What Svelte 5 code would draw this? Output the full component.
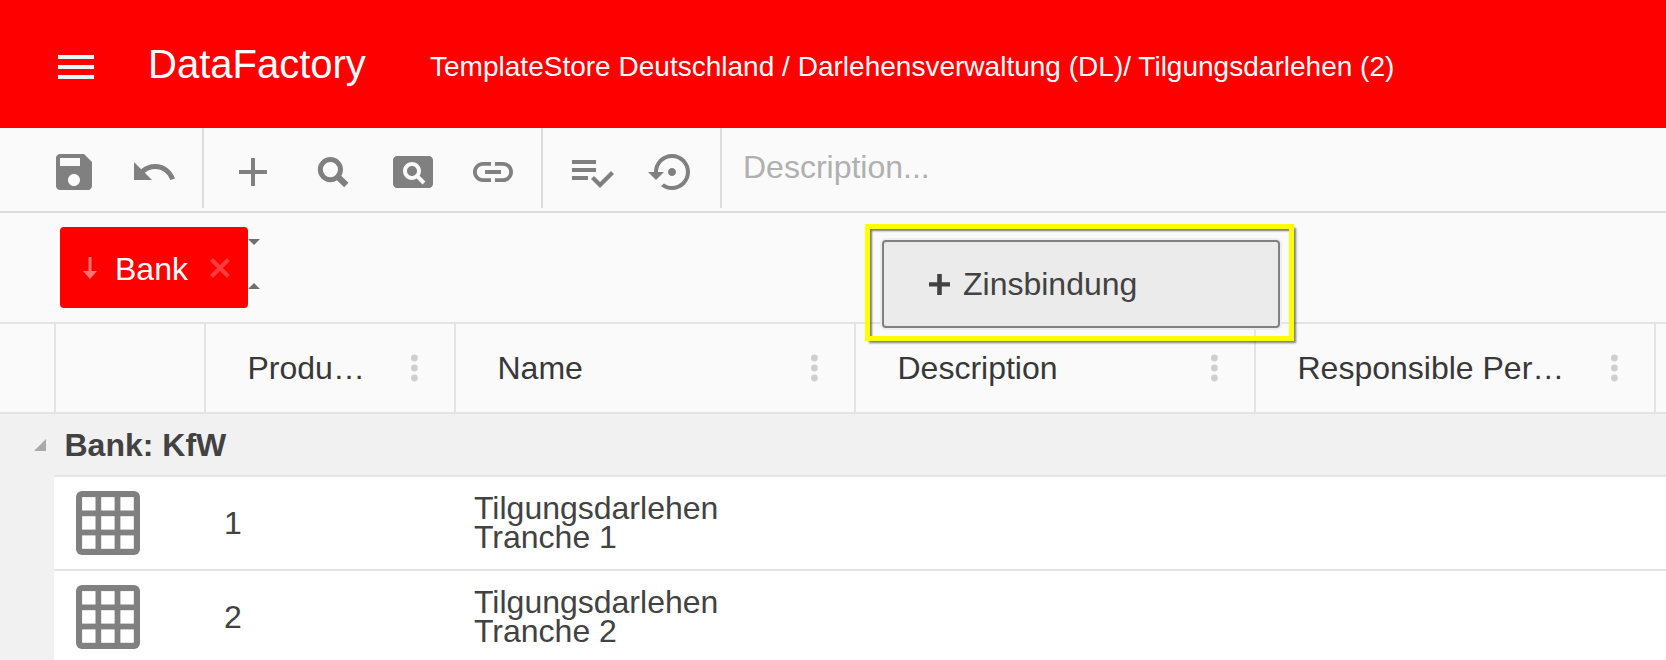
<script>
  const groups = [
    [
      'M17 3H5c-1.11 0-2 .9-2 2v14c0 1.1.89 2 2 2h14c1.1 0 2-.9 2-2V7l-4-4zm-5 16c-1.66 0-3-1.34-3-3s1.34-3 3-3 3 1.34 3 3-1.34 3-3 3zm3-10H5V5h10v4z',
      'M12.5 8c-2.65 0-5.05.99-6.9 2.6L2 7v9h9l-3.62-3.62c1.39-1.16 3.16-1.88 5.12-1.88 3.54 0 6.55 2.31 7.6 5.5l2.37-.78C21.08 11.03 17.15 8 12.5 8z'
    ],
    [
      'M19 13h-6v6h-2v-6H5v-2h6V5h2v6h6v2z',
      'search',
      'M11.5 9C10.12 9 9 10.12 9 11.5s1.12 2.5 2.5 2.5 2.5-1.12 2.5-2.5S12.88 9 11.5 9zM20 4H4c-1.1 0-2 .9-2 2v12c0 1.1.9 2 2 2h16c1.1 0 2-.9 2-2V6c0-1.1-.9-2-2-2zm-3.21 14.21l-2.91-2.91c-.69.44-1.51.7-2.39.7C9.01 16 7 13.99 7 11.5S9.01 7 11.5 7 16 9.01 16 11.5c0 .88-.26 1.69-.7 2.39l2.91 2.9-1.42 1.42z',
      'M3.9 12c0-1.71 1.39-3.1 3.1-3.1h4V7H7c-2.76 0-5 2.24-5 5s2.24 5 5 5h4v-1.9H7c-1.71 0-3.1-1.39-3.1-3.1zM8 13h8v-2H8v2zm9-6h-4v1.9h4c1.71 0 3.1 1.39 3.1 3.1s-1.39 3.1-3.1 3.1h-4V17h4c2.76 0 5-2.24 5-5s-2.24-5-5-5z'
    ],
    [
      'M14 10H2v2h12v-2zm0-4H2v2h12V6zM2 16h8v-2H2v2zm19.5-4.5L23 13l-6.99 7-4.51-4.5L13 14l3.01 3 5.49-5.5z',
      'M14 12c0-1.1-.9-2-2-2s-2 .9-2 2 .9 2 2 2 2-.9 2-2zm-2-9c-4.97 0-9 4.03-9 9H0l4 4 4-4H5c0-3.87 3.13-7 7-7s7 3.13 7 7-3.13 7-7 7c-1.51 0-2.91-.49-4.06-1.3l-1.42 1.44C8.04 20.3 9.94 21 12 21c4.97 0 9-4.03 9-9s-4.03-9-9-9z'
    ]
  ];
  const columns = ['Produ…', 'Name', 'Description', 'Responsible Per…'];
  const rows = [
    { id: 1, name: 'Tilgungsdarlehen Tranche 1' },
    { id: 2, name: 'Tilgungsdarlehen Tranche 2' }
  ];
  const cells = [6.1, 25.2, 44.4];
</script>

<div class="page">
  <header>
    <svg class="icon menu" viewBox="0 0 24 24"><path d="M3 18h18v-2H3v2zm0-5h18v-2H3v2zm0-7v2h18V6H3z" /></svg>
    <h1>DataFactory</h1>
    <div class="crumbs">TemplateStore Deutschland / Darlehensverwaltung (DL)/ Tilgungsdarlehen (2)</div>
  </header>

  <div class="toolbar">
    {#each groups as group}
      <div class="group">
        {#each group as icon}
          {#if icon === 'search'}
            <svg class="icon" viewBox="0 0 48 48">
              <circle cx="21.4" cy="21.6" r="10.1" fill="none" stroke="currentColor" stroke-width="5" />
              <path d="M28 28l9.3 9" stroke="currentColor" stroke-width="6.2" />
            </svg>
          {:else}
            <svg class="icon" viewBox="0 0 24 24"><path d={icon} /></svg>
          {/if}
        {/each}
      </div>
    {/each}
    <div class="placeholder">Description...</div>
  </div>

  <div class="grouping">
    <div class="chip">
      <svg class="arrow" viewBox="0 0 14 22"><path d="M5.5 0h3v14H14l-7 8-7-8h5.5z" /></svg>
      <span>Bank</span>
      <svg class="close" viewBox="0 0 20 20"><path d="M1.5 1.5l17 17M18.5 1.5l-17 17" /></svg>
    </div>
    <svg class="cue" viewBox="0 0 12 50"><path d="M0 0h12L6 6zM0 50h12l-6-6z" /></svg>
  </div>

  <div class="grid header-row">
    <div class="cell"></div>
    <div class="cell"></div>
    {#each columns as column}
      <div class="cell head">
        <span>{column}</span>
        <svg viewBox="0 0 8 28"><circle cx="4.4" cy="4" r="3.4" /><circle cx="4.4" cy="14" r="3.4" /><circle cx="4.4" cy="24" r="3.4" /></svg>
      </div>
    {/each}
  </div>

  <div class="group-row">
    <svg viewBox="0 0 12 12"><path d="M12 0v12H0z" /></svg>
    <strong>Bank: KfW</strong>
  </div>

  {#each rows as row}
    <div class="grid row">
      <div class="indent"></div>
      <div class="pic">
        <svg viewBox="0 0 64 64">
          <rect width="64" height="64" rx="6" />
          {#each cells as y}
            {#each cells as x}
              <rect class="hole" {x} {y} width="13.4" height="13.4" />
            {/each}
          {/each}
        </svg>
      </div>
      <div class="num">{row.id}</div>
      <div class="name">{row.name}</div>
    </div>
  {/each}

  <div class="highlight">
    <div class="drag">
      <svg viewBox="0 0 21 21"><path d="M8.2 0h4.6v8.2H21v4.4h-8.2V21H8.2v-8.4H0V8.2h8.2z" /></svg>
      <span>Zinsbindung</span>
    </div>
  </div>
</div>

<style>
  .page {
    position: relative;
    width: 1666px;
    height: 660px;
    overflow: hidden;
    background: #fafafa;
    font-family: 'Liberation Sans', Arial, sans-serif;
    font-size: 32px;
    color: #424242;
  }
  .page * { box-sizing: border-box; }
  svg { display: block; flex: none; fill: currentColor; }
  .icon { width: 48px; height: 48px; }

  header {
    display: flex;
    height: 128px;
    padding-left: 52px;
    background: #f00;
    color: #fff;
    white-space: nowrap;
  }
  .menu { margin-top: 43px; color: #e0ffff; }
  h1 { width: 282px; margin: 41px 0 0 48px; font-size: 40px; font-weight: 400; line-height: 46px; }
  .crumbs { margin-top: 51px; font-size: 28px; line-height: 32px; letter-spacing: .013px; }

  .toolbar {
    display: flex;
    height: 85px;
    border-bottom: 2px solid #dcdcdc;
    color: #808080;
  }
  .group {
    display: flex;
    gap: 32px;
    height: 80px;
    padding: 20px 24px 0 25px;
    border-right: 2px solid #dcdcdc;
  }
  .group:first-child { padding-left: 50px; }
  .placeholder { padding: 21px 0 0 21px; line-height: 36px; color: #b0b0b0; }

  .grouping {
    display: flex;
    height: 111px;
    padding: 14px 0 0 60px;
    border-bottom: 2px solid #e4e4e4;
  }
  .chip {
    display: flex;
    align-items: center;
    width: 188px;
    height: 81px;
    padding: 0 18px 0 23px;
    border-radius: 4px;
    background: #f00;
    color: #fff;
  }
  .arrow { width: 14px; height: 22px; opacity: .45; }
  .chip span { width: 95px; margin-top: 3px; padding-left: 18px; line-height: 36px; }
  .chip .close { width: 20px; height: 20px; margin-left: 18px; stroke: #ff3c3c; stroke-width: 4.2; }
  .cue { width: 12px; height: 50px; margin-top: 12px; color: #707070; }

  .grid { display: grid; grid-template-columns: 56px 150px 250px 400px 400px 400px 10px; }
  .header-row { height: 90px; border-bottom: 2px solid #e4e4e4; }
  .cell { border-right: 2px solid #e4e4e4; }
  .head {
    display: flex;
    align-items: center;
    justify-content: space-between;
    min-width: 0;
    padding: 0 36px 0 41.5px;
    color: #383838;
  }
  .head span { white-space: nowrap; line-height: 38px; }
  .head svg { width: 8px; height: 28px; color: #cfcfcf; }

  .group-row {
    display: flex;
    height: 61px;
    padding-left: 34px;
    background: #f1f1f1;
  }
  .group-row svg { width: 12px; height: 12px; margin-top: 25px; color: #aaa; }
  .group-row strong { margin: 13px 0 0 18.5px; line-height: 36px; }

  .row { grid-template-columns: 54px 150px 250px 400px 1fr; height: 94px; background: #fff; }
  .row > div { border-top: 2px solid #e4e4e4; }
  .row::after { content: ''; border-top: 2px solid #e4e4e4; }
  .row > .indent { border: 0; background: #f1f1f1; }
  .pic { padding: 14px 0 0 22px; }
  .pic svg { width: 64px; height: 64px; color: #808080; }
  .hole { fill: #fff; }
  .num { padding: 28px 0 0 20px; line-height: 36px; }
  .name { padding: 17px 120px 0 20px; line-height: 29px; }

  .highlight {
    position: absolute;
    left: 865px;
    top: 224px;
    width: 429px;
    height: 117px;
    padding: 11px 9px 8px 12px;
    border: 5px solid #ff0;
    box-shadow: 3px 3px 2px -1px rgba(0, 0, 0, .5), inset 2px 2px 2px rgba(0, 0, 0, .5);
  }
  .drag {
    display: flex;
    align-items: center;
    width: 398px;
    height: 88px;
    padding-left: 45px;
    border: 2px solid #808080;
    border-radius: 4px;
    background: #ebebeb;
    box-shadow: 0 0 0 2px #eee;
  }
  .drag svg { width: 21px; height: 21px; }
  .drag span { margin-left: 13px; line-height: 36px; }
</style>
